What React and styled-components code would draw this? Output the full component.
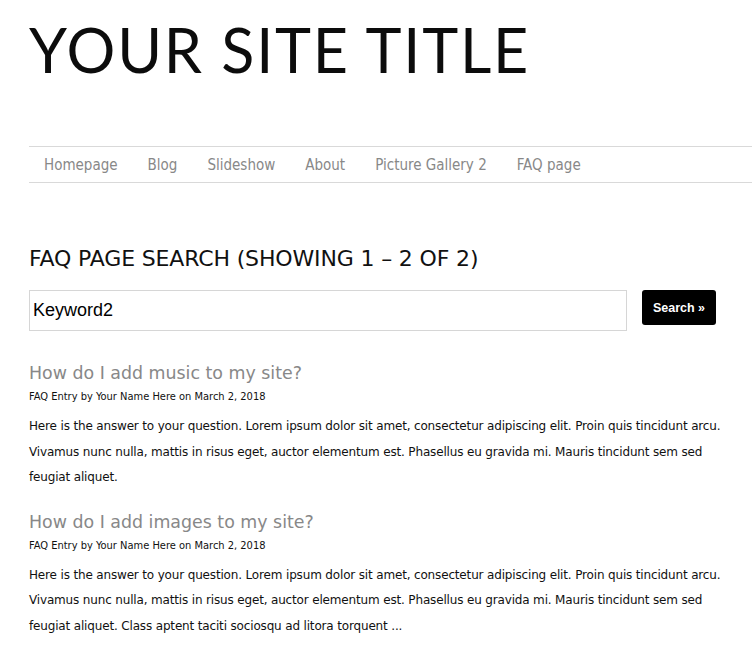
import React from "react";
import styled, { createGlobalStyle } from "styled-components";

const Global = createGlobalStyle`
  html, body { margin: 0; padding: 0; background: #fff; }
  body { font-family: "DejaVu Sans", Verdana, sans-serif; color: #111; }
  * { box-sizing: border-box; }
`;

const Page = styled.div`
  padding: 0 0 0 29px;
  width: 752px;
  overflow: hidden;
`;

const Header = styled.header`
  padding: 18px 0 0 0;
  height: 146px;
`;

const SiteTitle = styled.h1`
  margin: 0;
  font-family: Lato, "Liberation Sans", sans-serif;
  font-weight: 400;
  font-size: 61px;
  line-height: 64px;
  letter-spacing: 1.8px;
  color: #0c0c0c;
`;

const Nav = styled.nav`
  display: flex;
  border-top: 1px solid #d9d9d9;
  border-bottom: 1px solid #d9d9d9;
  height: 37px;
  align-items: center;
  padding-left: 15px;
`;

const NavLink = styled.a`
  font-family: "DejaVu Sans Condensed", "DejaVu Sans", sans-serif;
  font-size: 15px;
  color: #888;
  text-decoration: none;
  margin-right: 30px;
`;

const Main = styled.main`
  padding-top: 62px;
  width: 700px;
`;

const PageHeading = styled.h2`
  margin: 0 0 17px;
  font-family: "DejaVu Sans", sans-serif;
  font-weight: 400;
  font-size: 22px;
  line-height: 28px;
  letter-spacing: -0.15px;
  color: #111;
`;

const SearchRow = styled.form`
  display: flex;
  align-items: flex-start;
  gap: 15px;
  margin-bottom: 30px;
`;

const SearchInput = styled.input`
  width: 598px;
  height: 41px;
  border: 1px solid #d6d6d6;
  padding: 0 3px;
  font-family: "Liberation Sans", Arial, sans-serif;
  font-size: 18px;
  color: #000;
  outline: none;
`;

const SearchButton = styled.button`
  width: 74px;
  height: 35px;
  background: #000;
  color: #fff;
  border: none;
  border-radius: 3px;
  font-family: "Liberation Sans", Arial, sans-serif;
  font-weight: 700;
  font-size: 12.5px;
  padding: 0;
`;

const Entry = styled.article`
  margin-bottom: 19px;
`;

const EntryTitle = styled.h3`
  margin: 0;
  font-family: "DejaVu Sans", sans-serif;
  font-weight: 400;
  font-size: 17.4px;
  line-height: 24px;
  color: #888;
`;

const Meta = styled.div`
  font-family: "DejaVu Sans Condensed", "DejaVu Sans", sans-serif;
  font-size: 11px;
  line-height: 16px;
  margin: 4px 0 9px;
  color: #111;
`;

const Body = styled.p`
  margin: 0;
  font-family: "DejaVu Sans", sans-serif;
  font-size: 12px;
  line-height: 25.5px;
  letter-spacing: -0.16px;
  color: #111;
`;

const navItems = ["Homepage", "Blog", "Slideshow", "About", "Picture Gallery 2", "FAQ page"];

const lorem =
  "Here is the answer to your question. Lorem ipsum dolor sit amet, consectetur adipiscing elit. Proin quis tincidunt arcu. Vivamus nunc nulla, mattis in risus eget, auctor elementum est. Phasellus eu gravida mi. Mauris tincidunt sem sed feugiat aliquet.";

const entries = [
  { title: "How do I add music to my site?", body: lorem },
  { title: "How do I add images to my site?", body: lorem + " Class aptent taciti sociosqu ad litora torquent ..." },
];

export default function App() {
  return (
    <>
      <Global />
      <Page>
        <Header>
          <SiteTitle>YOUR SITE TITLE</SiteTitle>
        </Header>
        <Nav>
          {navItems.map((n) => (
            <NavLink key={n} href="#">{n}</NavLink>
          ))}
        </Nav>
        <Main>
          <PageHeading>FAQ PAGE SEARCH (SHOWING 1 – 2 OF 2)</PageHeading>
          <SearchRow onSubmit={(e) => e.preventDefault()}>
            <SearchInput defaultValue="Keyword2" />
            <SearchButton type="submit">Search »</SearchButton>
          </SearchRow>
          {entries.map((e) => (
            <Entry key={e.title}>
              <EntryTitle>{e.title}</EntryTitle>
              <Meta>FAQ Entry by Your Name Here on March 2, 2018</Meta>
              <Body>{e.body}</Body>
            </Entry>
          ))}
        </Main>
      </Page>
    </>
  );
}
